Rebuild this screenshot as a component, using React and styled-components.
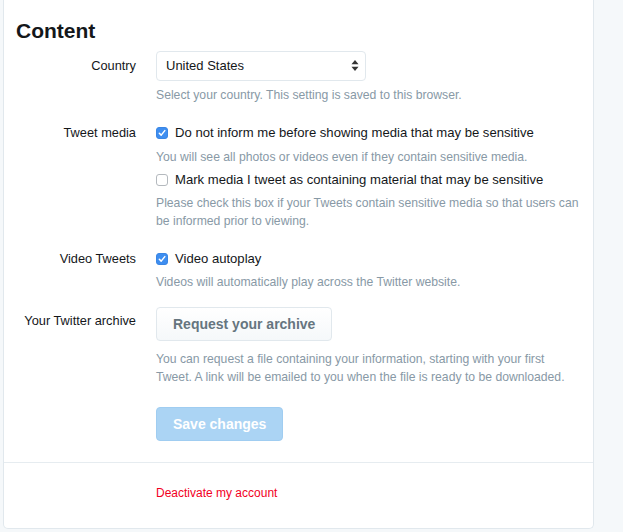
import React from 'react';
import styled, { createGlobalStyle } from 'styled-components';

const GlobalStyle = createGlobalStyle`
  body {
    margin: 0;
    background: #f5f8fa;
    font-family: "Liberation Sans", Arial, sans-serif;
    color: #14171a;
  }
`;

const Page = styled.div`
  padding-left: 3px;
`;

const Card = styled.div`
  width: 591px;
  box-sizing: border-box;
  background: #fff;
  border: 1px solid #e1e8ed;
  border-top: 0;
  border-radius: 0 0 5px 5px;
`;

const Section = styled.div`
  padding: ${(p) => p.$pad};
  border-top: ${(p) => (p.$divided ? '1px solid #e6ecf0' : '0')};
`;

const Heading = styled.h2`
  margin: 0 0 8px 12px;
  padding-top: 19px;
  font-size: 21px;
  line-height: 24px;
  font-weight: bold;
  color: #14171a;
`;

const Row = styled.div`
  display: grid;
  grid-template-columns: 120px 424px;
  column-gap: 20px;
  padding-left: 12px;
  margin-top: ${(p) => p.$top || 0}px;
`;

const Label = styled.div`
  text-align: right;
  white-space: nowrap;
  font-size: 12.8px;
  line-height: 20px;
  padding-top: ${(p) => p.$pt || 0}px;
  color: #14171a;
`;

const Controls = styled.div`
  display: flex;
  flex-direction: column;
  align-items: flex-start;
`;

const SelectBox = styled.div`
  width: 210px;
  height: 30px;
  box-sizing: border-box;
  border: 1px solid #e1e8ed;
  border-radius: 4px;
  display: flex;
  align-items: center;
  justify-content: space-between;
  padding: 0 6px 1px 9px;
  font-size: 13px;
  color: #14171a;
`;

const Help = styled.p`
  margin: ${(p) => p.$top || 5}px 0 0;
  font-size: 12.2px;
  line-height: 18px;
  color: #8899a6;
`;

const CheckLine = styled.label`
  display: flex;
  align-items: center;
  font-size: 13.1px;
  line-height: 20px;
  color: #14171a;
  margin-top: ${(p) => p.$top || 0}px;
`;

const Box = styled.span`
  width: 12px;
  height: 12px;
  box-sizing: border-box;
  border-radius: 3px;
  margin-right: 7px;
  display: inline-flex;
  align-items: center;
  justify-content: center;
  background: ${(p) => (p.$checked ? '#3e8ef0' : '#fff')};
  border: 1px solid ${(p) => (p.$checked ? '#3a86e4' : '#b4b9be')};
`;

const Button = styled.button`
  height: 34px;
  box-sizing: border-box;
  padding: 0 16px;
  border-radius: 4px;
  font-family: inherit;
  font-size: 14px;
  font-weight: bold;
  line-height: 20px;
  cursor: pointer;
  color: ${(p) => (p.$primary ? '#fff' : '#66757f')};
  background: ${(p) =>
    p.$primary ? '#abd4f4' : 'linear-gradient(#fff, #f5f8fa)'};
  border: 1px solid ${(p) => (p.$primary ? '#a0cdf1' : '#e1e8ed')};
`;

const DangerLink = styled.a`
  display: block;
  padding-left: 152px;
  font-size: 12px;
  line-height: 18px;
  color: #f2001e;
  text-decoration: none;
`;

const Arrows = () => (
  <svg width="8" height="11" viewBox="0 0 8 11">
    <path d="M4 0 L7.5 4.2 H0.5 Z" fill="#333" />
    <path d="M4 11 L7.5 6.8 H0.5 Z" fill="#333" />
  </svg>
);

const Checkbox = ({ checked, children, top }) => (
  <CheckLine $top={top}>
    <Box $checked={checked}>
      {checked && (
        <svg width="8" height="8" viewBox="0 0 8 8">
          <path d="M1.3 4.2 L3.2 6.1 L6.8 1.6" fill="none" stroke="#fff" strokeWidth="1.5" strokeLinecap="round" strokeLinejoin="round" />
        </svg>
      )}
    </Box>
    {children}
  </CheckLine>
);

export default function App() {
  return (
    <Page>
      <GlobalStyle />
      <Card>
        <Section $pad="0 0 21px">
          <Heading>Content</Heading>

          <Row>
            <Label $pt={5}>Country</Label>
            <Controls>
              <SelectBox>
                <span>United States</span>
                <Arrows />
              </SelectBox>
              <Help>Select your country. This setting is saved to this browser.</Help>
            </Controls>
          </Row>

          <Row $top={19}>
            <Label>Tweet media</Label>
            <Controls>
              <Checkbox checked>Do not inform me before showing media that may be sensitive</Checkbox>
              <Help>You will see all photos or videos even if they contain sensitive media.</Help>
              <Checkbox top={4}>Mark media I tweet as containing material that may be sensitive</Checkbox>
              <Help $top={4}>
                Please check this box if your Tweets contain sensitive media so that users can be
                informed prior to viewing.
              </Help>
            </Controls>
          </Row>

          <Row $top={19}>
            <Label>Video Tweets</Label>
            <Controls>
              <Checkbox checked>Video autoplay</Checkbox>
              <Help $top={4}>Videos will automatically play across the Twitter website.</Help>
            </Controls>
          </Row>

          <Row $top={16}>
            <Label $pt={4}>Your Twitter archive</Label>
            <Controls>
              <Button>Request your archive</Button>
              <Help $top={9}>
                You can request a file containing your information, starting with your first
                Tweet. A link will be emailed to you when the file is ready to be downloaded.
              </Help>
            </Controls>
          </Row>

          <Row $top={21}>
            <span />
            <Controls>
              <Button $primary>Save changes</Button>
            </Controls>
          </Row>
        </Section>

        <Section $divided $pad="21px 0 26px">
          <DangerLink href="#">Deactivate my account</DangerLink>
        </Section>
      </Card>
    </Page>
  );
}
